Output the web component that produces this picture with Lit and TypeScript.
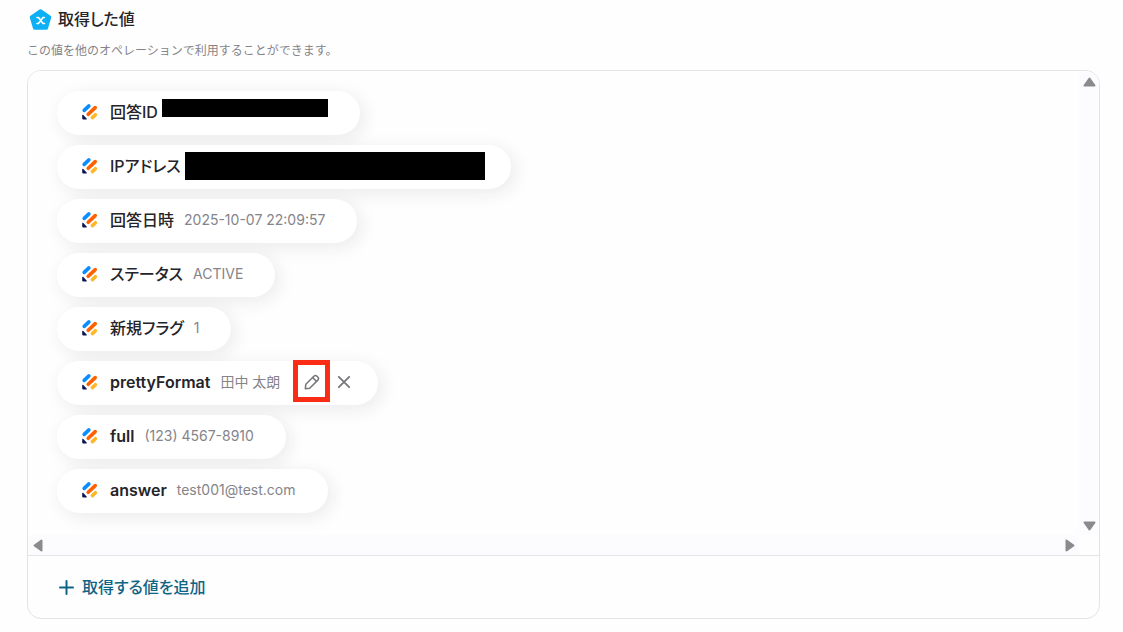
import { LitElement, html, svg, css, nothing } from "lit";
import { customElement, property } from "lit/decorators.js";
import { classMap } from "lit/directives/class-map.js";

interface Item {
  label: string;
  value?: string;
  redacted?: "small" | "large";
  editable?: boolean;
}

const ITEMS: Item[] = [
  { label: "回答ID", redacted: "small" },
  { label: "IPアドレス", redacted: "large" },
  { label: "回答日時", value: "2025-10-07 22:09:57" },
  { label: "ステータス", value: "ACTIVE" },
  { label: "新規フラグ", value: "1" },
  { label: "prettyFormat", value: "田中 太朗", editable: true },
  { label: "full", value: "(123) 4567-8910" },
  { label: "answer", value: "test001@test.com" },
];

const appLogo = svg`
  <svg width="18" height="18" viewBox="0 0 18 18" aria-hidden="true">
    <g fill="none" stroke-linecap="round" stroke-width="3.6">
      <path d="M3.200 7.400 7.900 2.900" stroke="#0a8dff" />
      <path d="M7.200 11.300 14.200 4.600" stroke="#ff6100" />
      <path d="M11.400 14.600 14.400 11.700" stroke="#ffb629" />
    </g>
    <path d="M1.200 12.200c0-.5.5-.7.9-.4l3.500 3.600c.4.4.2 1-.4 1H2c-.5 0-.8-.3-.8-.8z" fill="#0a1551" />
  </svg>`;

@customElement("value-chip")
export class ValueChip extends LitElement {
  @property({ attribute: false }) item!: Item;

  static styles = css`
    :host {
      display: flex;
    }
    .chip {
      display: flex;
      align-items: center;
      box-sizing: border-box;
      height: 44px;
      padding: 0 32px 2px 24px;
      border-radius: 22px;
      background: #fff;
      box-shadow: 4px 4px 18px rgba(40, 30, 60, 0.09);
    }
    svg {
      display: block;
      flex: none;
    }
    .label {
      margin-left: 11px;
      font-size: 16px;
      line-height: 24px;
      font-weight: 500;
      font-feature-settings: "palt";
      color: #252428;
      white-space: nowrap;
    }
    .latin {
      font-weight: 600;
    }
    .value {
      margin-left: 10px;
      font-size: 14px;
      line-height: 20px;
      color: #858489;
      white-space: nowrap;
    }
    .mask {
      margin-left: 4px;
      background: #000;
    }
    .small {
      width: 166px;
      height: 18px;
      margin-bottom: 8px;
    }
    .large {
      width: 300px;
      height: 28px;
    }
    .chip:has(.large) {
      padding-right: 26px;
    }
    .chip:has(.edit) {
      padding-right: 24px;
    }
    button {
      display: flex;
      align-items: center;
      justify-content: center;
      width: 20px;
      height: 20px;
      padding: 0;
      border: 0;
      background: none;
      cursor: pointer;
    }
    .edit {
      position: relative;
      margin-left: 22px;
    }
    .focus {
      position: absolute;
      inset: -12px -8px -10px -9px;
      border: 5px solid #fb2c16;
    }
    .remove {
      margin-left: 12px;
    }
  `;

  render() {
    const { label, value, redacted, editable } = this.item;
    const latin = /^[\x20-\x7e]+$/.test(label);
    return html`<div class="chip">
      ${appLogo}
      <span class=${classMap({ label: true, latin })}>${label}</span>
      ${redacted ? html`<span class="mask ${redacted}"></span>` : nothing}
      ${value ? html`<span class="value">${value}</span>` : nothing}
      ${editable
        ? html`<button class="edit" type="button" aria-label="編集">
              <svg width="18" height="18" viewBox="0 0 18 18" fill="none" stroke="#77767a" stroke-width="1.5" stroke-linejoin="round" stroke-linecap="round">
                <path d="M2.300 15.700 2.800 11.300 10.900 3.200a2.200 2.200 0 0 1 3.100 0l.8.8a2.200 2.200 0 0 1 0 3.100L6.700 15.200z" />
                <path d="M9.700 4.600 13.400 8.300" />
              </svg>
              <span class="focus"></span>
            </button>
            <button class="remove" type="button" aria-label="削除">
              <svg width="14" height="14" viewBox="0 0 14 14" fill="none" stroke="#77767a" stroke-width="1.8" stroke-linecap="round">
                <path d="M1.800 1.800 12.200 12.200M12.200 1.800 1.800 12.200" />
              </svg>
            </button>`
        : nothing}
    </div>`;
  }
}

@customElement("app-root")
export class AppRoot extends LitElement {
  static styles = css`
    :host {
      display: block;
      box-sizing: border-box;
      min-height: 100vh;
      padding: 7px 23px 13px 27px;
      background: #fefefe;
      font-family: Inter, "Noto Sans CJK JP", sans-serif;
    }
    .title {
      display: flex;
      align-items: center;
      gap: 5px;
      margin: 0 0 0 2px;
      font-size: 16px;
      line-height: 24px;
      font-weight: 500;
      font-feature-settings: "palt";
      color: #252428;
    }
    .note {
      margin: 10px 0 9px;
      font-size: 12px;
      line-height: 20px;
      color: #858489;
    }
    .card {
      border: 1px solid #e4e3e6;
      border-radius: 14px;
      overflow: hidden;
    }
    .viewport {
      display: grid;
      grid-template-columns: 1fr 20px;
      border-bottom: 1px solid #e4e3e6;
    }
    .list {
      display: flex;
      flex-direction: column;
      gap: 10px;
      margin: 0;
      padding: 20px 0 22px 29px;
      list-style: none;
      background: #fefefe;
    }
    .bar {
      display: flex;
      align-items: center;
      justify-content: space-between;
      background: #fcfbfd;
    }
    .vertical {
      flex-direction: column;
      padding: 6px 0 4px;
    }
    .horizontal {
      height: 20px;
      padding: 0 4px 0 5px;
    }
    .corner {
      background: #fefefe;
    }
    .bar button {
      display: flex;
      padding: 0;
      border: 0;
      background: none;
    }
    .foot {
      display: flex;
      padding: 15px 31px;
    }
    .add {
      display: flex;
      align-items: center;
      gap: 8px;
      height: 32px;
      padding: 0;
      border: 0;
      background: none;
      font-family: inherit;
      font-size: 16px;
      line-height: 24px;
      font-weight: 500;
      font-feature-settings: "palt";
      color: #0f6486;
      cursor: pointer;
    }
  `;

  private arrow(name: string, w: number, h: number, d: string) {
    return html`<button type="button" aria-label=${name}>
      <svg width=${w} height=${h} viewBox="0 0 ${w} ${h}"><path d=${d} fill="#8b8a8d" stroke="#8b8a8d" stroke-width="2" stroke-linejoin="round" /></svg>
    </button>`;
  }

  render() {
    return html`
      <h1 class="title">
        <svg width="24" height="24" viewBox="0 0 24 24" aria-hidden="true">
          <path d="M11.500 4 20.500 10.300 17.300 21H5.700L2.500 10.300z" fill="#0db0f5" stroke="#0db0f5" stroke-width="3.500" stroke-linejoin="round" />
          <path d="M8 10.500h1.500l4.500 6h1.500M15.300 10.500h-1.300l-4.500 6H8" fill="none" stroke="#fff" stroke-width="1.600" stroke-linecap="round" stroke-linejoin="round" />
        </svg>
        取得した値
      </h1>
      <p class="note">この値を他のオペレーションで利用することができます。</p>
      <section class="card">
        <div class="viewport">
          <ul class="list">
            ${ITEMS.map((item) => html`<li><value-chip .item=${item}></value-chip></li>`)}
          </ul>
          <div class="bar vertical">
            ${this.arrow("上へ", 13, 10, "M6.500 1.500 11.500 8.500H1.500z")}
            ${this.arrow("下へ", 13, 10, "M1.500 1.500H11.500L6.500 8.500z")}
          </div>
          <div class="bar horizontal">
            ${this.arrow("左へ", 10, 13, "M8.500 1.500V11.500L1.500 6.500z")}
            ${this.arrow("右へ", 10, 13, "M1.500 1.500 8.500 6.500 1.500 11.500z")}
          </div>
          <div class="corner"></div>
        </div>
        <div class="foot">
          <button class="add" type="button">
            <svg width="15" height="15" viewBox="0 0 15 15" fill="none" stroke="#0f6486" stroke-width="2" stroke-linecap="round">
              <path d="M7.500 1V14M1 7.500H14" />
            </svg>
            取得する値を追加
          </button>
        </div>
      </section>
    `;
  }
}
